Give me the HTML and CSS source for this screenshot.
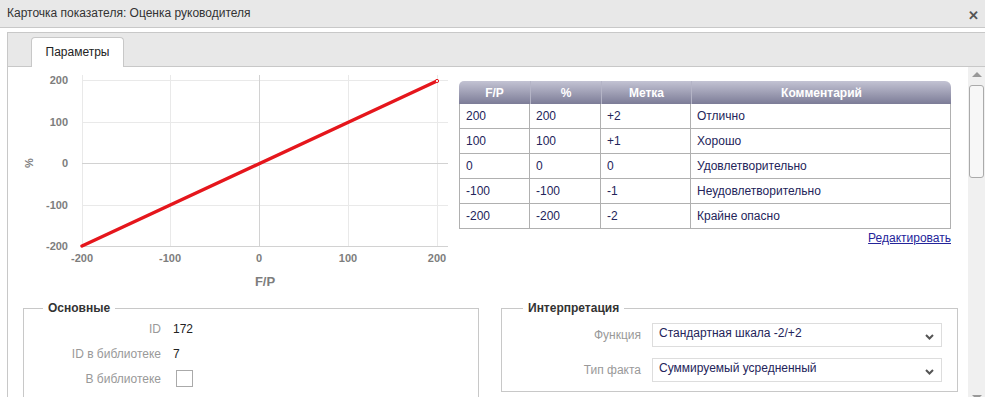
FILE: index.html
```html
<!DOCTYPE html>
<html>
<head>
    <meta charset="UTF-8">
    <title>Карточка показателя</title>
    <link rel="stylesheet" href="styles.css">
</head>
<body>
    <div class="titlebar">
        <span>Карточка показателя: Оценка руководителя</span>
        <span class="close">&#x2715;</span>
    </div>

    <div class="panel">
        <div class="tabs">
            <div class="tab">Параметры</div>
        </div>

        <div class="panel-body">
            <div class="main">
                <div class="top-row">
                    <!-- график: координаты в viewBox совпадают с пикселями страницы -->
                    <svg class="chart" width="447" height="230" viewBox="8 67 447 230">
                        <g stroke="#e9e9e9" stroke-width="1">
                            <line x1="82.5" y1="75" x2="82.5" y2="247"/>
                            <line x1="170.5" y1="75" x2="170.5" y2="247"/>
                            <line x1="348.5" y1="75" x2="348.5" y2="247"/>
                            <line x1="437.5" y1="75" x2="437.5" y2="247"/>
                            <line x1="82" y1="80.5" x2="448" y2="80.5"/>
                            <line x1="82" y1="122.5" x2="448" y2="122.5"/>
                            <line x1="82" y1="205.5" x2="448" y2="205.5"/>
                        </g>
                        <g stroke="#d2d2d2" stroke-width="1">
                            <line x1="259.5" y1="75" x2="259.5" y2="247"/>
                            <line x1="82" y1="163.5" x2="448" y2="163.5"/>
                            <line x1="82" y1="246.5" x2="448" y2="246.5"/>
                        </g>
                        <g class="tick" text-anchor="end">
                            <text x="68" y="84">200</text>
                            <text x="68" y="126">100</text>
                            <text x="68" y="167">0</text>
                            <text x="68" y="209">-100</text>
                            <text x="68" y="250">-200</text>
                        </g>
                        <g class="tick" text-anchor="middle">
                            <text x="82" y="262">-200</text>
                            <text x="170" y="262">-100</text>
                            <text x="259" y="262">0</text>
                            <text x="348" y="262">100</text>
                            <text x="437" y="262">200</text>
                        </g>
                        <text class="axis-title" x="265" y="286" text-anchor="middle">F/P</text>
                        <text class="tick" x="0" y="0" text-anchor="middle" transform="translate(33 163) rotate(-90)">%</text>
                        <line x1="82" y1="246" x2="437" y2="81" stroke="#e5161c" stroke-width="3.4" stroke-linecap="round"/>
                        <circle cx="437" cy="81" r="1.6" fill="#fff" stroke="#e5161c" stroke-width="1"/>
                    </svg>

                    <div class="scale">
                        <table class="scale-table">
                            <tr>
                                <th class="c1">F/P</th>
                                <th class="c2">%</th>
                                <th class="c3">Метка</th>
                                <th class="c4">Комментарий</th>
                            </tr>
                            <tr><td>200</td><td>200</td><td>+2</td><td>Отлично</td></tr>
                            <tr><td>100</td><td>100</td><td>+1</td><td>Хорошо</td></tr>
                            <tr><td>0</td><td>0</td><td>0</td><td>Удовлетворительно</td></tr>
                            <tr><td>-100</td><td>-100</td><td>-1</td><td>Неудовлетворительно</td></tr>
                            <tr><td>-200</td><td>-200</td><td>-2</td><td>Крайне опасно</td></tr>
                        </table>
                        <div class="edit-row"><a href="#">Редактировать</a></div>
                    </div>
                </div>

                <div class="groups">
                    <fieldset class="group group-main">
                        <legend>Основные</legend>
                        <div class="field">
                            <label>ID</label>
                            <span class="value">172</span>
                        </div>
                        <div class="field">
                            <label>ID в библиотеке</label>
                            <span class="value">7</span>
                        </div>
                        <div class="field">
                            <label>В библиотеке</label>
                            <span class="checkbox"></span>
                        </div>
                    </fieldset>

                    <fieldset class="group group-interp">
                        <legend>Интерпретация</legend>
                        <div class="field field-select">
                            <label>Функция</label>
                            <div class="select">
                                <span>Стандартная шкала -2/+2</span>
                                <svg width="9" height="6" viewBox="0 0 9 6"><path d="M1 1 L4.5 4.5 L8 1" fill="none" stroke="#555" stroke-width="2"/></svg>
                            </div>
                        </div>
                        <div class="field field-select">
                            <label>Тип факта</label>
                            <div class="select">
                                <span>Суммируемый усредненный</span>
                                <svg width="9" height="6" viewBox="0 0 9 6"><path d="M1 1 L4.5 4.5 L8 1" fill="none" stroke="#555" stroke-width="2"/></svg>
                            </div>
                        </div>
                    </fieldset>
                </div>
            </div>

            <div class="scrollbar">
                <div class="arrow-up"></div>
                <div class="thumb"></div>
                <div class="spacer"></div>
                <div class="arrow-down"></div>
            </div>
        </div>
    </div>
</body>
</html>
```

FILE: styles.css
```css
body {
    margin: 0;
    width: 985px;
    height: 397px;
    overflow: hidden;
    font-family: "Liberation Sans", Arial, sans-serif;
    font-size: 12px;
    color: #333;
    background-color: #fff;
}

.titlebar {
    height: 27px;
    line-height: 27px;
    padding: 0 6px 0 7px;
    background-color: #e8e8e8;
    border-bottom: 1px solid #c8c8c8;
    display: flex;
    justify-content: space-between;
}

.close {
    font-size: 13px;
    font-weight: bold;
    color: #555;
    padding-top: 2px;
}

.panel {
    margin-top: 4px;
    margin-left: 7px;
    border-left: 1px solid #c8c8c8;
}

.tabs {
    height: 35px;
    box-sizing: border-box;
    background-color: #e8e8e8;
    border-top: 1px solid #c8c8c8;
    border-bottom: 1px solid #c8c8c8;
    padding-left: 23px;
    display: flex;
    align-items: flex-end;
}

.tab {
    width: 93px;
    height: 30px;
    box-sizing: border-box;
    margin-bottom: -1px;
    background-color: #fff;
    border: 1px solid #c8c8c8;
    border-bottom: none;
    border-radius: 4px 4px 0 0;
    text-align: center;
    line-height: 28px;
    color: #222;
}

.panel-body {
    display: flex;
    height: 330px;
}

.main {
    flex: 1;
    overflow: hidden;
}

.top-row {
    display: flex;
    height: 234px;
}

.chart {
    display: block;
    flex: none;
}

.tick {
    font-family: "Liberation Sans", Arial, sans-serif;
    font-size: 11px;
    font-weight: bold;
    fill: #7d7d7d;
}

.axis-title {
    font-family: "Liberation Sans", Arial, sans-serif;
    font-size: 13px;
    font-weight: bold;
    fill: #7d7d7d;
}

.scale {
    margin-left: 4px;
    margin-top: 14px;
    width: 492px;
}

.scale-table {
    width: 492px;
    border-collapse: separate;
    border-spacing: 0;
    table-layout: fixed;
}

.scale-table th {
    height: 23px;
    padding: 0;
    color: #fff;
    font-weight: bold;
    background: linear-gradient(to bottom, #c3c3d3, #7c7c97);
    border-left: 1px solid #b4b4c6;
}

.scale-table th.c1 {
    width: 71px;
    border-left: none;
    border-top-left-radius: 5px;
}

.scale-table th.c2 {
    width: 70px;
}

.scale-table th.c3 {
    width: 89px;
}

.scale-table th.c4 {
    border-top-right-radius: 6px;
}

.scale-table td {
    height: 24px;
    padding: 0 0 0 6px;
    color: #24245a;
    border-right: 1px solid #b0b0b0;
    border-bottom: 1px solid #b0b0b0;
}

.scale-table td:first-child {
    border-left: 1px solid #b0b0b0;
}

.edit-row {
    text-align: right;
    margin-top: 2px;
}

.edit-row a {
    color: #24249a;
    text-decoration: underline;
}

.groups {
    display: flex;
    padding-left: 15px;
    gap: 22px;
}

.group {
    margin: 0;
    border: 1px solid #c8c8c8;
    box-sizing: border-box;
}

.group legend {
    padding: 0 5px;
    font-weight: bold;
    color: #333;
}

.group-main {
    width: 456px;
    height: 110px;
    padding: 1px 0 0 19px;
}

.group-interp {
    width: 456px;
    height: 91px;
    padding: 2px 15px 0 21px;
}

.field {
    display: flex;
    align-items: center;
    height: 25px;
}

.field label {
    width: 118px;
    text-align: right;
    color: #999;
    margin-right: 12px;
}

.value {
    color: #222;
}

.checkbox {
    width: 15px;
    height: 15px;
    margin-left: 3px;
    border: 1px solid #aaa;
    background-color: #fff;
}

.field-select {
    height: 35px;
}

.field-select label {
    margin-right: 11px;
}

.select {
    width: 290px;
    height: 24px;
    box-sizing: border-box;
    border: 1px solid #ddd;
    padding: 0 7px 0 6px;
    display: flex;
    justify-content: space-between;
    align-items: center;
    color: #24245a;
}

.select span {
    margin-top: -4px;
}

.select svg {
    margin-top: 4px;
}

.scrollbar {
    width: 17px;
    flex: none;
    background-color: #f0f0f0;
    display: flex;
    flex-direction: column;
    align-items: center;
}

.arrow-up {
    margin-top: 5px;
    width: 0;
    height: 0;
    border-left: 5px solid transparent;
    border-right: 5px solid transparent;
    border-bottom: 5px solid #999;
}

.thumb {
    margin-top: 8px;
    width: 15px;
    height: 93px;
    box-sizing: border-box;
    border: 1px solid #aaa;
    border-radius: 3px;
    background-color: #f7f7f7;
}

.spacer {
    flex: 1;
}

.arrow-down {
    width: 0;
    height: 0;
    border-left: 5px solid transparent;
    border-right: 5px solid transparent;
    border-top: 5px solid #999;
    margin-bottom: -3px;
}
```
